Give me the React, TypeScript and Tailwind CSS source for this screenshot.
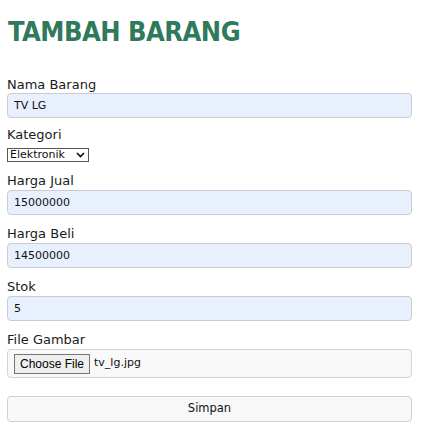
import React from "react";

const inputCls =
  "block w-[405px] h-[25px] rounded-[4px] border border-[#c8ccd0] bg-[#e8f0fe] px-[6px] text-[11px] text-[#111] outline-none";

function Field({ label, value }: { label: string; value: string }) {
  return (
    <div className="mb-[11px]">
      <label className="block h-[16px] text-[13px] leading-[16px] text-[#1a1a1a]">{label}</label>
      <input className={inputCls + " mt-[1px]"} defaultValue={value} readOnly />
    </div>
  );
}

export default function App() {
  return (
    <div className="min-h-[440px] bg-white px-[7px] font-['DejaVu_Sans',sans-serif]">
      <h1 className="pt-[14px] pb-[19px] pl-[1px] text-[27px] leading-[36px] font-bold tracking-[-0.5px] text-[#2e7a5a] font-['DejaVu_Sans_Condensed','DejaVu_Sans',sans-serif]">
        TAMBAH BARANG
      </h1>
      <form className="mt-[8px]">
        <div className="mb-[9px]">
          <label className="block h-[16px] text-[13px] leading-[16px] text-[#1a1a1a]">Nama Barang</label>
          <input className={inputCls} defaultValue="TV LG" readOnly />
        </div>
        <div className="mb-[11px]">
          <label className="block h-[16px] text-[13px] leading-[16px] text-[#1a1a1a]">Kategori</label>
          <div className="mt-[5px] flex h-[14px] w-[82px] items-center justify-between border border-[#555] bg-white pl-[2px] pr-[3px]">
            <span className="text-[11px] leading-[12px] text-[#111]">Elektronik</span>
            <svg width="9" height="6" viewBox="0 0 9 6">
              <path d="M1 1 L4.5 4.5 L8 1" fill="none" stroke="#111" strokeWidth="1.7" />
            </svg>
          </div>
        </div>
        <Field label="Harga Jual" value="15000000" />
        <Field label="Harga Beli" value="14500000" />
        <Field label="Stok" value="5" />
        <div className="mb-[18px]">
          <label className="block h-[16px] text-[13px] leading-[16px] text-[#1a1a1a]">File Gambar</label>
          <div className="mt-[1px] flex h-[29px] w-[405px] items-center gap-[4px] rounded-[4px] border border-[#d4d4d4] bg-[#f9f9f9] px-[6px]">
            <span className="flex h-[20px] items-center border border-[#767676] bg-[#efefef] px-[5px] text-[12px] text-black font-['Liberation_Sans',sans-serif]">
              Choose File
            </span>
            <span className="text-[11px] text-[#111]">tv_lg.jpg</span>
          </div>
        </div>
        <button
          type="button"
          className="flex h-[26px] w-[405px] items-center justify-center rounded-[4px] border border-[#cfcfcf] bg-[#f8f8f8] text-[11.5px] text-[#111]"
        >
          Simpan
        </button>
      </form>
    </div>
  );
}
